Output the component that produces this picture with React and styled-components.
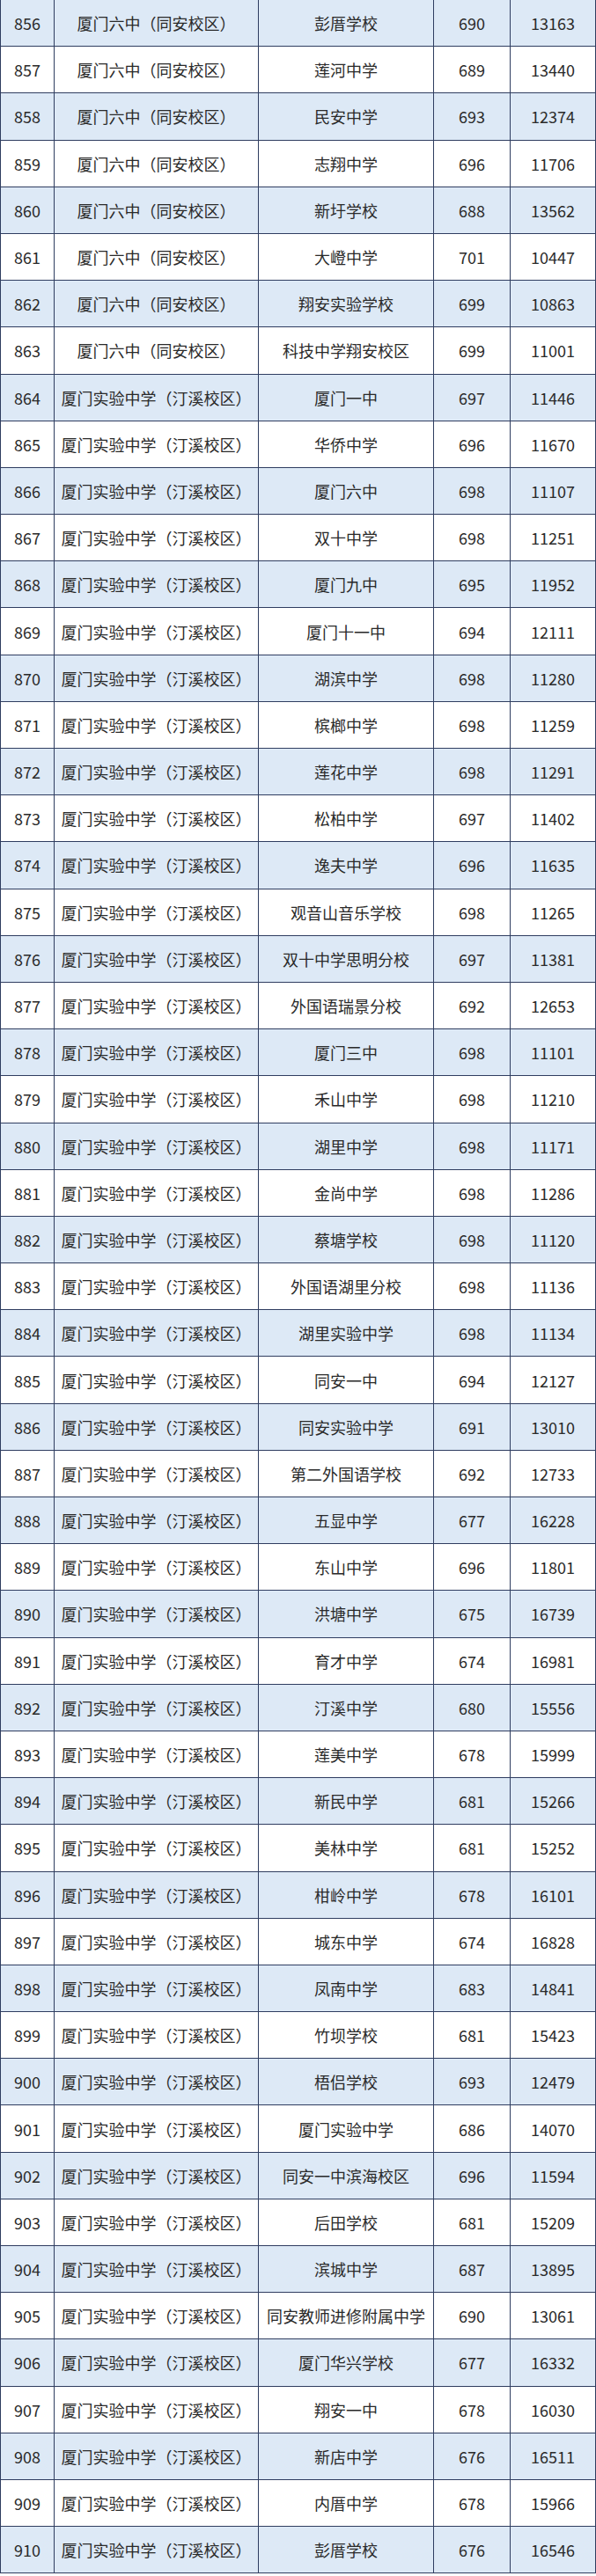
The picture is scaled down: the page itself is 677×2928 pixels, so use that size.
import React from "react";
import styled, { createGlobalStyle } from "styled-components";

const Global = createGlobalStyle`
  html, body { margin: 0; padding: 0; background: #ffffff; }
  body { font-family: "Noto Sans CJK SC", "Noto Sans", sans-serif; }
`;

const LINE = "#2f3d60";

const Table = styled.div`
  width: 677px;
  display: flex;
  flex-direction: column;
`;

const Row = styled.div`
  display: grid;
  grid-template-columns: 62px 232px 199px 87px 97px;
  height: 53.2px;
  box-sizing: border-box;
  border-bottom: 1.5px solid ${LINE};
  background: ${(p) => (p.$shaded ? "#dde9f6" : "#ffffff")};
`;

const Cell = styled.div`
  display: flex;
  align-items: center;
  justify-content: center;
  box-sizing: border-box;
  border-right: 1.5px solid ${LINE};
  ${(p) => (p.$first ? `border-left: 1.5px solid ${LINE};` : "")}
  font-size: 18px;
  color: #2a2a2a;
  white-space: nowrap;
  overflow: hidden;
`;

const LIUZHONG = "厦门六中（同安校区）";
const SHIYAN = "厦门实验中学（汀溪校区）";

const raw = [
  [LIUZHONG, "彭厝学校", 690, 13163],
  [LIUZHONG, "莲河中学", 689, 13440],
  [LIUZHONG, "民安中学", 693, 12374],
  [LIUZHONG, "志翔中学", 696, 11706],
  [LIUZHONG, "新圩学校", 688, 13562],
  [LIUZHONG, "大嶝中学", 701, 10447],
  [LIUZHONG, "翔安实验学校", 699, 10863],
  [LIUZHONG, "科技中学翔安校区", 699, 11001],
  [SHIYAN, "厦门一中", 697, 11446],
  [SHIYAN, "华侨中学", 696, 11670],
  [SHIYAN, "厦门六中", 698, 11107],
  [SHIYAN, "双十中学", 698, 11251],
  [SHIYAN, "厦门九中", 695, 11952],
  [SHIYAN, "厦门十一中", 694, 12111],
  [SHIYAN, "湖滨中学", 698, 11280],
  [SHIYAN, "槟榔中学", 698, 11259],
  [SHIYAN, "莲花中学", 698, 11291],
  [SHIYAN, "松柏中学", 697, 11402],
  [SHIYAN, "逸夫中学", 696, 11635],
  [SHIYAN, "观音山音乐学校", 698, 11265],
  [SHIYAN, "双十中学思明分校", 697, 11381],
  [SHIYAN, "外国语瑞景分校", 692, 12653],
  [SHIYAN, "厦门三中", 698, 11101],
  [SHIYAN, "禾山中学", 698, 11210],
  [SHIYAN, "湖里中学", 698, 11171],
  [SHIYAN, "金尚中学", 698, 11286],
  [SHIYAN, "蔡塘学校", 698, 11120],
  [SHIYAN, "外国语湖里分校", 698, 11136],
  [SHIYAN, "湖里实验中学", 698, 11134],
  [SHIYAN, "同安一中", 694, 12127],
  [SHIYAN, "同安实验中学", 691, 13010],
  [SHIYAN, "第二外国语学校", 692, 12733],
  [SHIYAN, "五显中学", 677, 16228],
  [SHIYAN, "东山中学", 696, 11801],
  [SHIYAN, "洪塘中学", 675, 16739],
  [SHIYAN, "育才中学", 674, 16981],
  [SHIYAN, "汀溪中学", 680, 15556],
  [SHIYAN, "莲美中学", 678, 15999],
  [SHIYAN, "新民中学", 681, 15266],
  [SHIYAN, "美林中学", 681, 15252],
  [SHIYAN, "柑岭中学", 678, 16101],
  [SHIYAN, "城东中学", 674, 16828],
  [SHIYAN, "凤南中学", 683, 14841],
  [SHIYAN, "竹坝学校", 681, 15423],
  [SHIYAN, "梧侣学校", 693, 12479],
  [SHIYAN, "厦门实验中学", 686, 14070],
  [SHIYAN, "同安一中滨海校区", 696, 11594],
  [SHIYAN, "后田学校", 681, 15209],
  [SHIYAN, "滨城中学", 687, 13895],
  [SHIYAN, "同安教师进修附属中学", 690, 13061],
  [SHIYAN, "厦门华兴学校", 677, 16332],
  [SHIYAN, "翔安一中", 678, 16030],
  [SHIYAN, "新店中学", 676, 16511],
  [SHIYAN, "内厝中学", 678, 15966],
  [SHIYAN, "彭厝学校", 676, 16546],
];

export default function App() {
  return (
    <>
      <Global />
      <Table>
        {raw.map((r, i) => (
          <Row key={i} $shaded={i % 2 === 0}>
            <Cell $first>{856 + i}</Cell>
            <Cell>{r[0]}</Cell>
            <Cell>{r[1]}</Cell>
            <Cell>{r[2]}</Cell>
            <Cell>{r[3]}</Cell>
          </Row>
        ))}
      </Table>
    </>
  );
}
